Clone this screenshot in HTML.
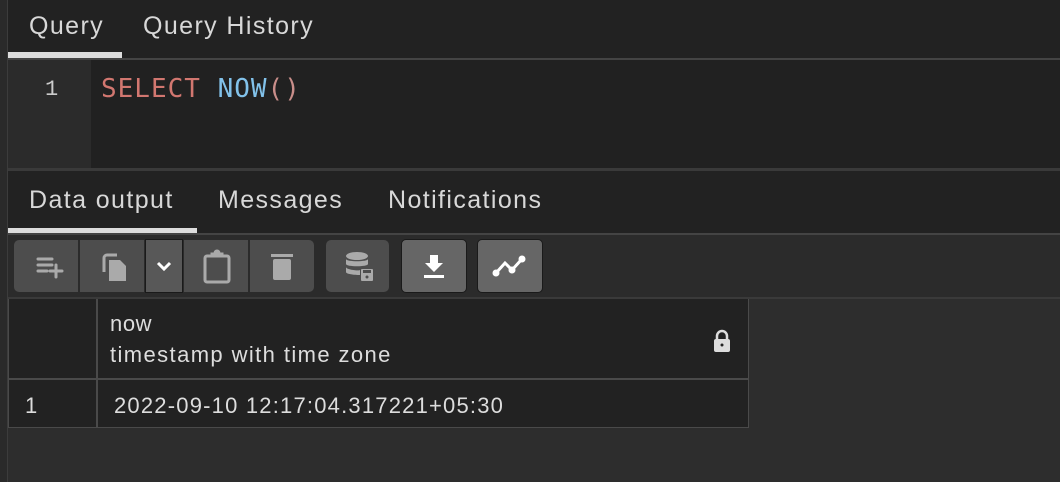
<!DOCTYPE html>
<html><head><style>
body{margin:0;width:1060px;height:482px;background:#2d2d2d;font-family:"Liberation Sans",sans-serif;position:relative;overflow:hidden}
.a{position:absolute}
.tab{position:absolute;color:#d8d8d8;font-size:25px;letter-spacing:1.4px}
.btn{position:absolute;top:240px;height:52px;background:#4d4d4d;border-radius:5px;display:flex;align-items:center;justify-content:center}
</style></head><body>
<div class="a" style="left:0;top:0;width:7px;height:482px;background:#2a2a2a;border-right:1px solid #3c3c3c"></div>
<div class="a" style="left:8px;top:0;width:1052px;height:58px;background:#222"></div>
<div class="tab" style="left:29px;top:12px">Query</div>
<div class="tab" style="left:143px;top:12px">Query History</div>
<div class="a" style="left:8px;top:52px;width:114px;height:6px;background:#ddd"></div>
<div class="a" style="left:8px;top:58px;width:1052px;height:2px;background:#444"></div>
<div class="a" style="left:8px;top:60px;width:83px;height:108px;background:#2b2b2b"></div>
<div class="a" style="left:91px;top:60px;width:969px;height:108px;background:#212121"></div>
<div class="a" style="left:45px;top:77px;color:#ccc;font:22px 'Liberation Mono',monospace">1</div>
<div class="a" style="left:101px;top:74px;font:26px 'DejaVu Sans Mono',monospace;letter-spacing:1px"><span style="color:#d27770">SELECT</span> <span style="color:#82c2ea">NOW</span><span style="color:#c98e8a">()</span></div>
<div class="a" style="left:8px;top:168px;width:1052px;height:3px;background:#3a3a3a"></div>
<div class="a" style="left:8px;top:171px;width:1052px;height:62px;background:#222"></div>
<div class="tab" style="left:29px;top:186px">Data output</div>
<div class="tab" style="left:218px;top:186px">Messages</div>
<div class="tab" style="left:388px;top:186px">Notifications</div>
<div class="a" style="left:8px;top:228px;width:189px;height:5px;background:#ddd"></div>
<div class="a" style="left:8px;top:233px;width:1052px;height:2px;background:#444"></div>
<div class="a" style="left:8px;top:235px;width:1052px;height:62px;background:#2b2b2b"></div>
<div class="btn" style="left:14px;width:64px;border-radius:5px 0 0 5px"><svg width="40" height="30" viewBox="0 0 40 30" fill="none" stroke="#aaa" stroke-width="3" stroke-linecap="round"><path d="M12 8h14M12 14h14M12 20h9M30 14v12M24 20h12"/></svg></div>
<div class="btn" style="left:80px;width:64px;border-radius:0"><svg width="40" height="40" viewBox="0 0 40 40"><path d="M12 26V12a3 3 0 0 1 3-3h10" stroke="#aaa" stroke-width="3" fill="none"/><path d="M17 14h11l6 6v15h-17z" fill="#aaa"/></svg></div>
<div class="btn" style="left:145px;width:36px;border-radius:0;background:#585858;border:1px solid #1a1a1a;top:239px"><svg width="20" height="14"><path d="M4 4l6 6 6-6" stroke="#fff" stroke-width="3" fill="none"/></svg></div>
<div class="btn" style="left:184px;width:64px;border-radius:0"><svg width="40" height="40" viewBox="0 0 40 40" fill="none" stroke="#aaa" stroke-width="3"><rect x="9" y="10" width="24" height="26" rx="2"/><path d="M16 10v-2h10v2" /><circle cx="21" cy="7" r="2" fill="#aaa"/></svg></div>
<div class="btn" style="left:250px;width:64px;border-radius:0 5px 5px 0"><svg width="40" height="40" viewBox="0 0 40 40"><rect x="9" y="8" width="22" height="3" fill="#aaa"/><rect x="11" y="13" width="18" height="21" rx="2" fill="#aaa"/></svg></div>
<div class="btn" style="left:326px;width:63px"><svg width="40" height="40" viewBox="0 0 40 40" fill="#aaa"><ellipse cx="19" cy="10" rx="11" ry="4"/><path d="M8 13c0 3 22 3 22 0v5c0 3-22 3-22 0zM8 21c0 3 14 4 14 3v5c-6 0-14-1-14-3z"/><rect x="23" y="23" width="12" height="12" rx="1"/><rect x="25" y="24" width="8" height="3" fill="#4d4d4d"/><circle cx="29" cy="31" r="1.5" fill="#4d4d4d"/></svg></div>
<div class="btn" style="left:401px;top:239px;width:64px;background:#666;border:1px solid #1a1a1a"><svg width="30" height="30" viewBox="0 0 30 30" fill="#fff"><path d="M11 4h8v8h5l-9 9-9-9h5z"/><rect x="5" y="24" width="20" height="3"/></svg></div>
<div class="btn" style="left:477px;top:239px;width:64px;background:#666;border:1px solid #1a1a1a"><svg width="40" height="30" viewBox="0 0 40 30" fill="none" stroke="#fff" stroke-width="3" stroke-linecap="round"><path d="M6 22l9-10 7 7 10-11"/><circle cx="6" cy="22" r="2" fill="#fff"/><circle cx="22" cy="19" r="2" fill="#fff"/><circle cx="32" cy="8" r="2" fill="#fff"/></svg></div>
<div class="a" style="left:8px;top:297px;width:1052px;height:2px;background:#3a3a3a"></div>
<div class="a" style="left:8px;top:299px;width:741px;height:129px;background:#222;border:1px solid #4a4a4a;border-top:none;box-sizing:border-box"></div>
<div class="a" style="left:96px;top:299px;width:2px;height:129px;background:#4a4a4a"></div>
<div class="a" style="left:8px;top:378px;width:741px;height:2px;background:#4a4a4a"></div>
<div class="a" style="left:110px;top:311px;color:#ddd;font-size:22px;letter-spacing:0.6px">now</div>
<div class="a" style="left:110px;top:342px;color:#ddd;font-size:22px;letter-spacing:1.4px">timestamp with time zone</div>
<svg class="a" style="left:711px;top:328px" width="22" height="26" viewBox="0 0 22 26"><path d="M6 11V8a5 5 0 0 1 10 0v3" stroke="#ddd" stroke-width="2.5" fill="none"/><rect x="3" y="11" width="16" height="13" rx="2" fill="#ddd"/><circle cx="11" cy="17" r="1.5" fill="#222"/></svg>
<div class="a" style="left:25px;top:393px;color:#ddd;font-size:22px">1</div>
<div class="a" style="left:114px;top:393px;color:#ddd;font-size:22px;letter-spacing:1.2px">2022-09-10 12:17:04.317221+05:30</div>
</body></html>
